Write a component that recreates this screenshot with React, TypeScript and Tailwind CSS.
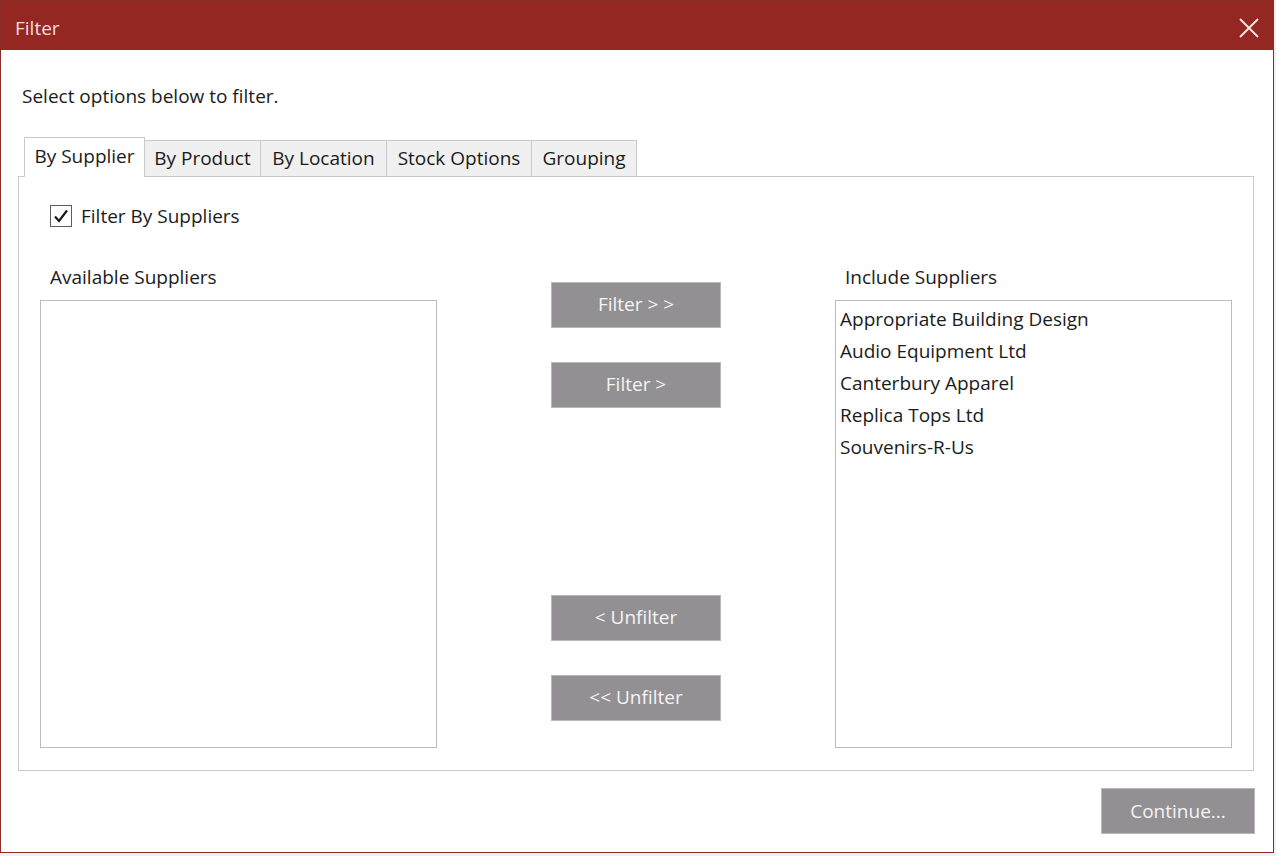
import React from "react";

const suppliers = [
  "Appropriate Building Design",
  "Audio Equipment Ltd",
  "Canterbury Apparel",
  "Replica Tops Ltd",
  "Souvenirs-R-Us",
];

const tabs = [
  { label: "By Product", w: "w-[116px]" },
  { label: "By Location", w: "w-[126px]" },
  { label: "Stock Options", w: "w-[145px]" },
  { label: "Grouping", w: "w-[105px]" },
];

function GrayButton({ children }: { children: React.ReactNode }) {
  return (
    <button className="flex h-[46px] w-[170px] items-center justify-center border border-[#b9b7b9] bg-[#939093] text-[19px] text-[#f4f4f4]">
      {children}
    </button>
  );
}

export default function App() {
  return (
    <div
      className="h-[856px] w-[1276px] bg-[#f0f0f0] text-[#1b1b1b]"
      style={{ fontFamily: '"Open Sans", "Noto Sans", sans-serif' }}
    >
      <div className="flex h-[853px] w-[1274px] flex-col border border-[#8a2d28] bg-white">
        {/* title bar */}
        <div className="flex h-[49px] shrink-0 items-center justify-between bg-[#952722] pl-[14px] pr-[13px] pt-[5px]">
          <span className="text-[19px] text-[#f5dcdc]">Filter</span>
          <svg width="22" height="22" viewBox="0 0 22 22">
            <path d="M2 2 L20 20 M20 2 L2 20" stroke="#f6e8e8" strokeWidth="1.8" />
          </svg>
        </div>

        <div className="flex flex-1 flex-col pl-[17px] pr-[19px]">
          <p className="mt-[33px] pl-[4px] text-[19px] leading-[26px]">Select options below to filter.</p>

          {/* tabs */}
          <div className="mt-[28px] flex items-end pl-[6px]">
            <div className="relative z-10 -mb-px flex h-[40px] w-[121px] items-center justify-center border border-b-0 border-[#c9c9c9] bg-white pb-[2px] text-[19px]">
              By Supplier
            </div>
            {tabs.map((t) => (
              <div
                key={t.label}
                className={`flex h-[36px] ${t.w} items-center justify-center border border-b-0 border-l-0 border-[#c9c9c9] bg-[#f0f0f0] text-[19px]`}
              >
                {t.label}
              </div>
            ))}
          </div>

          {/* panel */}
          <div className="flex h-[595px] flex-col border border-[#c9c9c9] px-[21px]">
            <label className="mt-[25px] flex items-center gap-[9px] pl-[10px]">
              <svg width="22" height="22" viewBox="0 0 22 22">
                <rect x="0.5" y="0.5" width="21" height="21" fill="white" stroke="#5c5c5c" />
                <path d="M5 11.5 L9 16 L17 5.5" fill="none" stroke="#1b1b1b" strokeWidth="2.2" />
              </svg>
              <span className="text-[19px]">Filter By Suppliers</span>
            </label>

            <div className="mt-[34px] flex justify-between">
              <div className="flex flex-col">
                <span className="h-[24px] pl-[10px] text-[19px] leading-[24px]">Available Suppliers</span>
                <div className="mt-[11px] h-[448px] w-[397px] border border-[#bcbcbc] bg-white" />
              </div>

              <div className="flex flex-col pt-[17px]">
                <GrayButton>Filter &gt; &gt;</GrayButton>
                <div className="mt-[34px]">
                  <GrayButton>Filter &gt;</GrayButton>
                </div>
                <div className="mt-[187px]">
                  <GrayButton>&lt; Unfilter</GrayButton>
                </div>
                <div className="mt-[34px]">
                  <GrayButton>&lt;&lt; Unfilter</GrayButton>
                </div>
              </div>

              <div className="flex flex-col">
                <span className="h-[24px] pl-[10px] text-[19px] leading-[24px]">Include Suppliers</span>
                <div className="mt-[11px] flex h-[448px] w-[397px] flex-col border border-[#bcbcbc] bg-white pl-[4px] pt-[2px]">
                  {suppliers.map((s) => (
                    <div key={s} className="h-[32px] text-[19px] leading-[32px]">
                      {s}
                    </div>
                  ))}
                </div>
              </div>
            </div>
          </div>

          <div className="mt-[17px] flex justify-end">
            <button className="-mr-[1px] flex h-[46px] w-[154px] items-center justify-center border border-[#b9b7b9] bg-[#939093] text-[19px] text-[#f4f4f4]">
              Continue...
            </button>
          </div>
        </div>
      </div>
    </div>
  );
}
